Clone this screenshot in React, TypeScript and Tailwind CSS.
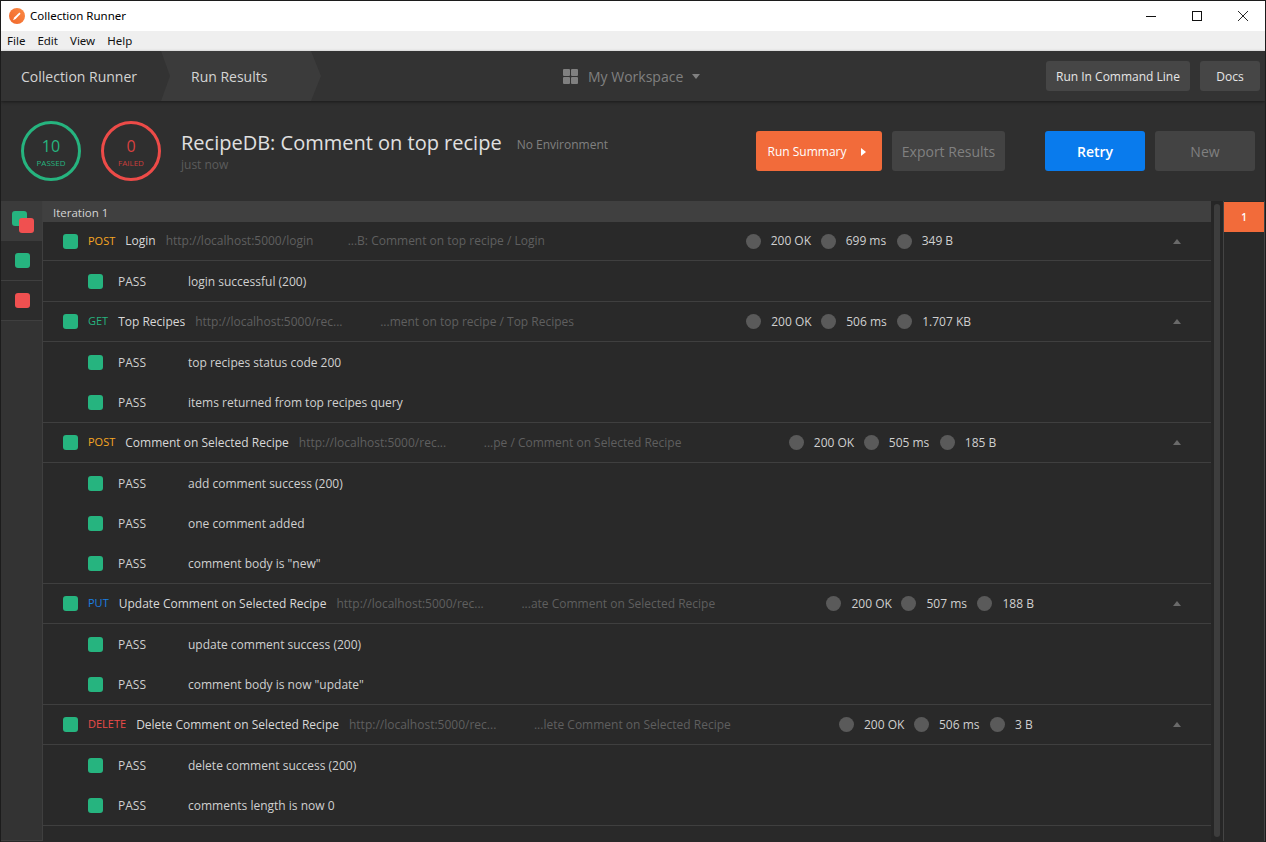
import React from "react";

const Square = ({ red = false }: { red?: boolean }) => (
  <span className={`block h-[15px] w-[15px] shrink-0 rounded-[3px] ${red ? "bg-[#f05050]" : "bg-[#26b47f]"}`} />
);

const Stat = ({ text, w }: { text: string; w: string }) => (
  <div className="flex items-center">
    <span className="h-[15px] w-[15px] shrink-0 rounded-full bg-[#5a5a5a]" />
    <span className={`ml-[10px] whitespace-nowrap text-[#d0d0d0] ${w}`}>{text}</span>
  </div>
);

type Group = {
  method: string;
  mc: string;
  name: string;
  url: string;
  urlW: string;
  path: string;
  pathW: string;
  stats: string[];
  tests: string[];
};

const groups: Group[] = [
  {
    method: "POST", mc: "text-[#f5a623]", name: "Login", url: "http://localhost:5000/login", urlW: "w-[182px]",
    path: "...B: Comment on top recipe / Login", pathW: "w-[398px]", stats: ["200 OK", "699 ms", "349 B"],
    tests: ["login successful (200)"],
  },
  {
    method: "GET", mc: "text-[#26b47f]", name: "Top Recipes", url: "http://localhost:5000/rec...", urlW: "w-[185px]",
    path: "...ment on top recipe / Top Recipes", pathW: "w-[366px]", stats: ["200 OK", "506 ms", "1.707 KB"],
    tests: ["top recipes status code 200", "items returned from top recipes query"],
  },
  {
    method: "POST", mc: "text-[#f5a623]", name: "Comment on Selected Recipe", url: "http://localhost:5000/rec...", urlW: "w-[185px]",
    path: "...pe / Comment on Selected Recipe", pathW: "w-[305px]", stats: ["200 OK", "505 ms", "185 B"],
    tests: ["add comment success (200)", "one comment added", 'comment body is "new"'],
  },
  {
    method: "PUT", mc: "text-[#1b7fe0]", name: "Update Comment on Selected Recipe", url: "http://localhost:5000/rec...", urlW: "w-[185px]",
    path: "...ate Comment on Selected Recipe", pathW: "w-[305px]", stats: ["200 OK", "507 ms", "188 B"],
    tests: ["update comment success (200)", 'comment body is now "update"'],
  },
  {
    method: "DELETE", mc: "text-[#ed4b48]", name: "Delete Comment on Selected Recipe", url: "http://localhost:5000/rec...", urlW: "w-[185px]",
    path: "...lete Comment on Selected Recipe", pathW: "w-[305px]", stats: ["200 OK", "506 ms", "3 B"],
    tests: ["delete comment success (200)", "comments length is now 0"],
  },
];

const Circle = ({ n, label, border, num, lab }: { n: string; label: string; border: string; num: string; lab: string }) => (
  <div className={`flex h-[60px] w-[60px] flex-col items-center justify-center rounded-full border-[3px] pt-[3px] ${border}`}>
    <span className={`text-[16px] leading-[20px] ${num}`}>{n}</span>
    <span className={`text-[8px] leading-[14px] ${lab}`}>{label}</span>
  </div>
);

export default function App() {
  return (
    <div
      className="flex h-[842px] w-[1266px] flex-col overflow-hidden border border-b-0 border-[#1c1c1c] bg-[#292929] text-[12px]"
      style={{ fontFamily: '"Open Sans", sans-serif' }}
    >
      {/* title bar */}
      <div className="flex h-[30px] shrink-0 items-center bg-white pl-[8px] text-black">
        <svg width="16" height="16" viewBox="0 0 16 16" className="shrink-0">
          <defs>
            <linearGradient id="pm" x1="0" y1="1" x2="1" y2="0">
              <stop offset="0" stopColor="#f0662a" />
              <stop offset="1" stopColor="#fb8a45" />
            </linearGradient>
          </defs>
          <circle cx="8" cy="8" r="8" fill="url(#pm)" />
          <path d="M4 12.2 L5.2 9.6 L10.4 4.6 L11.6 5.7 L6.6 10.9 Z" fill="#fff" />
        </svg>
        <span className="ml-[5px] text-[11.5px]" style={{ fontFamily: '"Noto Sans", sans-serif' }}>Collection Runner</span>
        <div className="ml-auto flex items-center">
          <svg width="12" height="12" viewBox="0 0 12 12" className="mr-[34px]"><path d="M1 6.5 H11" stroke="#111" strokeWidth="1" /></svg>
          <svg width="12" height="12" viewBox="0 0 12 12" className="mr-[34px]"><rect x="1.5" y="1.5" width="9" height="9" fill="none" stroke="#111" strokeWidth="1" /></svg>
          <svg width="12" height="12" viewBox="0 0 12 12" className="mr-[16px]"><path d="M1 1 L11 11 M11 1 L1 11" stroke="#111" strokeWidth="0.9" /></svg>
        </div>
      </div>
      {/* menu */}
      <div className="flex h-[20px] shrink-0 items-center gap-[12px] bg-[#efefef] pl-[6px] text-[11.5px] text-[#111]" style={{ fontFamily: '"Noto Sans", sans-serif' }}>
        <span>File</span><span>Edit</span><span>View</span><span>Help</span>
      </div>
      {/* header */}
      <div className="relative z-10 flex h-[50px] shrink-0 items-center bg-[#333333] shadow-[0_1px_3px_rgba(0,0,0,0.45)]">
        <div className="flex h-full w-[169px] shrink-0 items-center pl-[20px] text-[14px] font-medium text-[#d4d4d4]">Collection Runner</div>
        <div className="-ml-[9px] flex h-full w-[160px] shrink-0 items-center bg-[#3b3b3b] pl-[30px] text-[14px] font-medium text-[#d4d4d4] [clip-path:polygon(0_0,150px_0,160px_50%,150px_100%,0_100%,9px_50%)]">Run Results</div>
        <div className="ml-[242px] flex items-center">
          <svg width="15" height="15" viewBox="0 0 15 15"><g fill="#808080"><rect width="7" height="7" rx="1" /><rect x="8" width="7" height="7" rx="1" /><rect y="8" width="7" height="7" rx="1" /><rect x="8" y="8" width="7" height="7" rx="1" /></g></svg>
          <span className="ml-[10px] text-[14px] font-medium text-[#808080]">My Workspace</span>
          <svg width="8" height="5" viewBox="0 0 8 5" className="ml-[9px]"><path d="M0 0H8L4 5Z" fill="#808080" /></svg>
        </div>
        <div className="ml-auto mr-[5px] flex gap-[10px]">
          <div className="flex h-[30px] w-[144px] items-center justify-center rounded-[3px] bg-[#464646] pt-[1px] font-medium text-[#e6e6e6]">Run In Command Line</div>
          <div className="flex h-[30px] w-[60px] items-center justify-center rounded-[3px] bg-[#464646] pt-[1px] font-medium text-[#e6e6e6]">Docs</div>
        </div>
      </div>
      {/* summary */}
      <div className="flex h-[100px] shrink-0 items-center bg-[#2f2f2f] pl-[20px]">
        <Circle n="10" label="PASSED" border="border-[#26b47f]" num="text-[#26b47f]" lab="text-[#26b47f]" />
        <div className="ml-[20px]">
          <Circle n="0" label="FAILED" border="border-[#ed4b48]" num="text-[#d8413f]" lab="text-[#c93e3c]" />
        </div>
        <div className="ml-[20px] flex flex-col">
          <div className="flex items-baseline">
            <span className="text-[20px] leading-[28px] text-[#e0e0e0]">RecipeDB: Comment on top recipe</span>
            <span className="ml-[15px] -translate-y-[1px] text-[#808080]">No Environment</span>
          </div>
          <span className="leading-[16px] text-[#5c5c5c]">just now</span>
        </div>
        <div className="ml-auto mr-[10px] flex items-center">
          <div className="flex h-[40px] w-[126px] items-center justify-center rounded-[3px] bg-[#f26b3a] pr-[4px] pt-[1px] font-medium text-white">
            <span>Run Summary</span>
            <svg width="5" height="8" viewBox="0 0 5 8" className="ml-[15px]"><path d="M0 0L5 4L0 8Z" fill="#fff" /></svg>
          </div>
          <div className="ml-[10px] flex h-[40px] w-[113px] items-center justify-center rounded-[3px] bg-[#434343] text-[14px] text-[#808080]">Export Results</div>
          <div className="ml-[40px] flex h-[40px] w-[100px] items-center justify-center rounded-[3px] bg-[#097bed] text-[14px] font-semibold text-white">Retry</div>
          <div className="ml-[10px] flex h-[40px] w-[100px] items-center justify-center rounded-[3px] bg-[#434343] text-[14px] text-[#808080]">New</div>
        </div>
      </div>
      {/* body */}
      <div className="flex min-h-0 flex-1">
        {/* sidebar */}
        <div className="mb-[1px] flex w-[42px] shrink-0 flex-col border-r border-b border-[#3f3f3f] bg-[#333333]">
          <div className="relative h-[40px] bg-[#3b3b3b]">
            <span className="absolute left-[11px] top-[10px] h-[15px] w-[15px] rounded-[3px] bg-[#26b47f]" />
            <span className="absolute left-[18px] top-[17px] h-[15px] w-[15px] rounded-[3px] bg-[#f05050]" />
          </div>
          <div className="flex h-[40px] items-center justify-center border-b border-[#3f3f3f] bg-[#2c2c2c] pl-[2px]"><Square /></div>
          <div className="flex h-[40px] items-center justify-center border-b border-[#3f3f3f] bg-[#2c2c2c] pl-[2px]"><Square red /></div>
        </div>
        {/* results */}
        <div className="flex min-w-0 w-[1168px] shrink-0 flex-col">
          <div className="flex h-[21px] shrink-0 items-center bg-[#404040] pl-[10px] pt-[2px] text-[11.5px] font-medium text-[#d4d4d4]">Iteration 1</div>
          {groups.map((g, i) => (
            <div key={g.name} className="border-b border-[#3f3f3f]">
              <div className={`flex items-center border-b border-[#3f3f3f] pl-[20px] ${i === 0 ? "h-[39px]" : "h-[40px]"}`}>
                <Square />
                <span className={`ml-[10px] text-[11px] ${g.mc}`}>{g.method}</span>
                <span className="ml-[10px] whitespace-nowrap font-medium text-[#d8d8d8]">{g.name}</span>
                <span className={`ml-[10px] whitespace-nowrap text-[#5f5f5f] ${g.urlW}`}>{g.url}</span>
                <span className={`whitespace-nowrap text-[#5f5f5f] ${g.pathW}`}>{g.path}</span>
                <div className="flex items-center gap-[8px]">
                  <Stat text={g.stats[0]} w="w-[42px]" />
                  <Stat text={g.stats[1]} w="w-[43px]" />
                  <Stat text={g.stats[2]} w="w-[60px]" />
                </div>
                <svg width="8" height="5" viewBox="0 0 8 5" className="ml-auto mr-[30px]"><path d="M0 5H8L4 0Z" fill="#6a6a6a" /></svg>
              </div>
              {g.tests.map((t) => (
                <div key={t} className="flex h-[40px] items-center pl-[45px] pt-[1px]">
                  <Square />
                  <span className="ml-[15px] w-[70px] text-[#d0d0d0]">PASS</span>
                  <span className="font-medium text-[#d0d0d0]">{t}</span>
                </div>
              ))}
            </div>
          ))}
        </div>
        {/* scrollbar */}
        <div className="flex w-[12px] shrink-0 justify-center bg-[#262626] pb-[5px] pt-[3px]">
          <div className="w-[6px] rounded-full bg-[#3d3d3d]" />
        </div>
        {/* iterations */}
        <div className="mb-[1px] flex min-w-0 flex-1 flex-col border-x border-[#444444] pt-[1px]">
          <div className="flex h-[30px] items-center justify-center bg-[#f26b3a] text-[10px] font-semibold text-white">1</div>
        </div>
      </div>
    </div>
  );
}
